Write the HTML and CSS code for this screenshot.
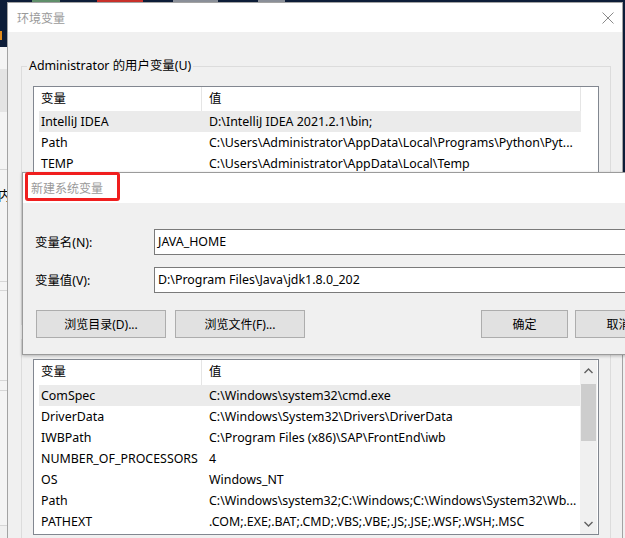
FILE: index.html
```html
<!DOCTYPE html>
<html lang="zh-CN">
<head>
    <meta charset="UTF-8">
    <title>环境变量</title>
    <link rel="stylesheet" href="styles.css">
</head>
<body>
    <div class="desktop">
        <div class="taskstrip">
            <span class="chip" style="width:32px"></span>
            <span class="chip chip-green" style="width:28px"></span>
            <span class="chip" style="width:37px"></span>
            <span class="chip chip-red" style="width:46px"></span>
            <span class="chip" style="width:30px"></span>
            <span class="chip chip-gray" style="width:45px"></span>
            <span class="chip" style="width:40px"></span>
            <span class="chip chip-gray" style="width:27px"></span>
        </div>
        <span class="orange-mark"></span>

        <!-- window behind, only its right edge shows -->
        <div class="bgwin">
            <div class="bg-row" style="height:22px"></div>
            <div class="bg-row bg-band" style="height:43px"></div>
            <div class="bg-row line" style="height:58px"></div>
            <div class="bg-row line bg-text" style="height:112px">内</div>
            <div class="bg-row line" style="height:9px"></div>
            <div class="bg-row line" style="height:90px"></div>
            <div class="bg-row line" style="height:10px"></div>
            <div class="bg-row line" style="height:135px"></div>
        </div>
        <div class="bgwin-right"></div>

        <div class="dialog env">
            <div class="titlebar">
                <span class="title">环境变量</span>
                <svg class="close" width="12" height="12" viewBox="0 0 12 12">
                    <path d="M0.5 0.5 L11.5 11.5 M11.5 0.5 L0.5 11.5" stroke="#8a8a8a" stroke-width="1" fill="none"/>
                </svg>
            </div>
            <div class="body">
                <fieldset class="group user-group">
                    <legend>Administrator 的用户变量(U)</legend>
                    <div class="list user-list">
                        <div class="rows">
                            <div class="row head"><span class="name">变量</span><span class="value">值</span></div>
                            <div class="row selected"><span class="name">IntelliJ IDEA</span><span class="value">D:\IntelliJ IDEA 2021.2.1\bin;</span></div>
                            <div class="row"><span class="name">Path</span><span class="value">C:\Users\Administrator\AppData\Local\Programs\Python\Pyt...</span></div>
                            <div class="row"><span class="name">TEMP</span><span class="value">C:\Users\Administrator\AppData\Local\Temp</span></div>
                            <div class="row"><span class="name">TMP</span><span class="value">C:\Users\Administrator\AppData\Local\Temp</span></div>
                        </div>
                        <div class="scroll-empty"></div>
                    </div>
                    <div class="group-btns">
                        <button class="btn">新建(N)...</button>
                        <button class="btn">编辑(E)...</button>
                        <button class="btn">删除(D)</button>
                    </div>
                </fieldset>

                <fieldset class="group sys-group">
                    <legend>系统变量(S)</legend>
                    <div class="list sys-list">
                        <div class="rows">
                            <div class="row head"><span class="name">变量</span><span class="value">值</span></div>
                            <div class="row selected"><span class="name">ComSpec</span><span class="value">C:\Windows\system32\cmd.exe</span></div>
                            <div class="row"><span class="name">DriverData</span><span class="value">C:\Windows\System32\Drivers\DriverData</span></div>
                            <div class="row"><span class="name">IWBPath</span><span class="value">C:\Program Files (x86)\SAP\FrontEnd\iwb</span></div>
                            <div class="row"><span class="name">NUMBER_OF_PROCESSORS</span><span class="value">4</span></div>
                            <div class="row"><span class="name">OS</span><span class="value">Windows_NT</span></div>
                            <div class="row"><span class="name">Path</span><span class="value">C:\Windows\system32;C:\Windows;C:\Windows\System32\Wb...</span></div>
                            <div class="row"><span class="name">PATHEXT</span><span class="value">.COM;.EXE;.BAT;.CMD;.VBS;.VBE;.JS;.JSE;.WSF;.WSH;.MSC</span></div>
                        </div>
                        <div class="scrollbar">
                            <svg class="arrow" width="9" height="6" viewBox="0 0 9 6">
                                <path d="M0.5 5 L4.5 1 L8.5 5" stroke="#606060" stroke-width="1.4" fill="none"/>
                            </svg>
                            <div class="track"><div class="thumb"></div></div>
                            <svg class="arrow" width="9" height="6" viewBox="0 0 9 6">
                                <path d="M0.5 1 L4.5 5 L8.5 1" stroke="#606060" stroke-width="1.4" fill="none"/>
                            </svg>
                        </div>
                    </div>
                </fieldset>
            </div>
        </div>

        <div class="dialog newvar">
            <div class="titlebar">
                <span class="title">新建系统变量</span>
                <span class="mark"></span>
            </div>
            <div class="body">
                <div class="field">
                    <label class="label">变量名(N):</label>
                    <div class="input">JAVA_HOME</div>
                </div>
                <div class="field">
                    <label class="label">变量值(V):</label>
                    <div class="input">D:\Program Files\Java\jdk1.8.0_202</div>
                </div>
                <div class="actions">
                    <button class="btn btn-wide">浏览目录(D)...</button>
                    <button class="btn btn-wide">浏览文件(F)...</button>
                    <span class="spacer"></span>
                    <button class="btn btn-small">确定</button>
                    <button class="btn btn-small">取消</button>
                </div>
            </div>
        </div>
    </div>
</body>
</html>
```

FILE: styles.css
```css
* {
    margin: 0;
    padding: 0;
    box-sizing: border-box;
}

body {
    margin: 0;
    font-family: "Noto Sans", "Noto Sans CJK SC", sans-serif;
    font-size: 12.4px;
    color: #000;
    background: #0d1d38;
}

.desktop {
    position: relative;
    width: 625px;
    height: 538px;
    overflow: hidden;
    background: #0d1d38;
}

/* taskbar bits at the very top */
.taskstrip {
    position: absolute;
    top: 0;
    left: 0;
    width: 100%;
    height: 3px;
    display: flex;
}

.chip {
    height: 3px;
    background: #0d1d38;
}

.chip-green { background: #5f8f6a; }
.chip-red { background: #c8302a; }
.chip-gray { background: #8a8f98; }

.orange-mark {
    position: absolute;
    left: 0;
    top: 31px;
    width: 2px;
    height: 9px;
    background: #e08a1a;
}

/* background windows */
.bgwin {
    position: absolute;
    left: -300px;
    top: 47px;
    width: 308px;
    height: 500px;
    background: #f0f0f0;
}

.bgwin-right {
    position: absolute;
    left: 620px;
    top: 300px;
    width: 40px;
    height: 260px;
    background: #f0f0f0;
}

.bg-row {
    background: #f4f4f4;
}

.bg-band {
    background: #e4e4e4;
}

.line {
    border-bottom: 1px solid #d6d6d6;
}

.bg-text {
    text-align: right;
    padding-top: 17px;
    font-size: 13px;
    line-height: 16px;
    margin-right: -3px;
}

/* dialogs */
.dialog {
    position: absolute;
    background: #f0f0f0;
    border: 1px solid #a3a3a3;
}

.env {
    left: 7px;
    top: 2px;
    width: 616px;
    height: 560px;
}

.titlebar {
    position: relative;
    display: flex;
    align-items: center;
    justify-content: space-between;
    background: #fff;
}

.env .titlebar {
    height: 29px;
    padding: 0 8px 0 9px;
}

.title {
    color: #9a9a9a;
    font-size: 12px;
}

.close {
    display: block;
}

.env .body {
    padding: 26px 11px 0 13px;
}

.group {
    border: 1px solid #dcdcdc;
    padding: 12px 11px 10px 11px;
}

.group legend {
    margin-left: -6px;
    padding: 0 2px;
    line-height: 16px;
}

.sys-group {
    margin-top: 6px;
}

.list {
    display: flex;
    background: #fff;
    border: 1px solid #828790;
}

.user-list {
    height: 190px;
}

.sys-list {
    height: 176px;
}

.rows {
    flex: 1;
    padding-left: 5px;
    min-width: 0;
}

.row {
    display: flex;
    height: 21px;
    line-height: 21px;
    white-space: nowrap;
}

.row .name {
    width: 163px;
    padding-left: 2px;
    overflow: hidden;
}

.row .value {
    flex: 1;
    padding-left: 7px;
    overflow: hidden;
}

.row.head {
    height: 24px;
    line-height: 23px;
}

.sys-list .row.head {
    height: 25px;
    line-height: 24px;
}

.row.head .name {
    border-right: 1px solid #e5e5e5;
}

.user-list .row.head .value {
    border-right: 1px solid #e5e5e5;
}

.row.selected {
    background: #ebebeb;
}

.scroll-empty {
    width: 17px;
}

.scrollbar {
    width: 17px;
    margin-right: 1px;
    display: flex;
    flex-direction: column;
    align-items: center;
    background: #f0f0f0;
}

.arrow {
    display: block;
    margin: 8px 0 7px;
}

.track {
    flex: 1;
    width: 100%;
    padding-top: 3px;
}

.thumb {
    height: 57px;
    width: 15px;
    margin: 0 auto;
    background: #cdcdcd;
}

.group-btns {
    display: flex;
    justify-content: flex-end;
    gap: 8px;
    margin-top: 10px;
}

.btn {
    height: 28px;
    font-family: inherit;
    font-size: 12px;
    color: #000;
    background: #e1e1e1;
    border: 1px solid #adadad;
}

.group-btns .btn {
    width: 87px;
}

/* 新建系统变量 */
.newvar {
    left: 22px;
    top: 172px;
    width: 653px;
    height: 183px;
    border-color: #9b9b9b;
    box-shadow: 0 1px 3px rgba(0, 0, 0, 0.25);
}

.newvar .titlebar {
    height: 30px;
    padding-left: 8px;
}

.mark {
    position: absolute;
    left: 2px;
    top: -1px;
    width: 95px;
    height: 29px;
    border: 3px solid #f01e1e;
    border-radius: 3px;
}

.newvar .body {
    padding: 26px 12px 0 12px;
}

.field {
    display: flex;
    align-items: center;
    margin-bottom: 12px;
}

.label {
    width: 119px;
}

.input {
    flex: 1;
    height: 26px;
    line-height: 24px;
    padding-left: 3px;
    background: #fff;
    border: 1px solid #7a7a7a;
    white-space: nowrap;
}

.actions {
    display: flex;
    padding-left: 1px;
    margin-top: 17px;
}

.btn-wide {
    width: 130px;
    margin-right: 9px;
}

.spacer {
    flex: 1;
}

.btn-small {
    width: 87px;
    margin-left: 7px;
}
```
